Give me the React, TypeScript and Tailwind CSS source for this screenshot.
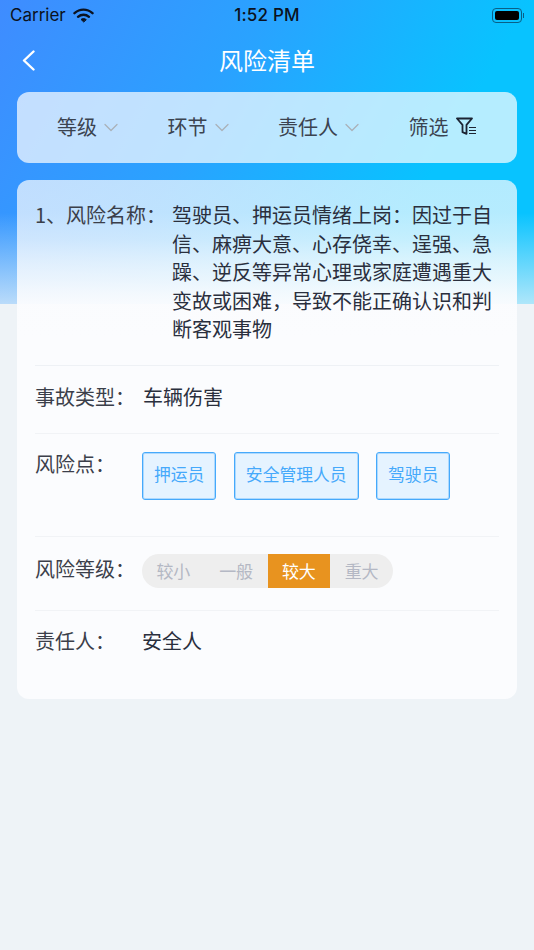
const font = { fontFamily: '"Noto Sans CJK SC", "Noto Sans", sans-serif' };

const filters = ['等级', '环节', '责任人'];
const points = ['押运员', '安全管理人员', '驾驶员'];
const levels = ['较小', '一般', '较大', '重大'];

function StatusBar() {
  return (
    <div className="flex h-[30px] items-center justify-between pl-[10px] pr-[10px] font-['Inter',sans-serif] text-[#0b1220]">
      <div className="flex w-[120px] items-center gap-[7px] text-[17px] leading-none">
        <span>Carrier</span>
        <svg width="21" height="15" viewBox="0 0 21 15" fill="none" stroke="#0b1220" strokeLinecap="round">
          <path d="M1.5 5.2C6.8 .4 14.2 .4 19.5 5.2" strokeWidth="2.4" />
          <path d="M5 8.8C8.2 6 12.8 6 16 8.8" strokeWidth="2.4" />
          <path d="M10.5 13.8 8 11.4c1.5-1.1 3.5-1.1 5 0z" fill="#0b1220" strokeWidth="1" />
        </svg>
      </div>
      <span className="text-[17px] font-medium leading-none tracking-[0.2px]">1:52 PM</span>
      <div className="flex w-[120px] items-center justify-end">
        <div className="flex h-[15px] w-[30px] items-center rounded-[4px] border border-[#0a5f86] p-[2px]">
          <div className="h-full w-full rounded-[2px] bg-black" />
        </div>
        <div className="ml-[1px] h-[5px] w-[1px] bg-[#0a5f86]" />
      </div>
    </div>
  );
}

function Caret() {
  return (
    <svg className="mt-[2px]" width="14" height="9" viewBox="0 0 14 9" fill="none" stroke="#aab1b8" strokeWidth="1.3" strokeLinecap="round" strokeLinejoin="round">
      <path d="M1 1.5 7 7.5l6-6" />
    </svg>
  );
}

function FilterIcon() {
  return (
    <svg width="21" height="19" viewBox="0 0 21 19" fill="none" stroke="#1c2433" strokeWidth="1.8">
      <path d="M1 1.5h15l-5.5 6.3v9l-4-1.6V7.8z" strokeLinejoin="round" />
      <path d="M13 10.5h7M13 13.5h7M13 16.5h7" strokeWidth="1.2" />
    </svg>
  );
}

function Row({
  label,
  children,
  className,
  labelClass = '',
}: {
  label: string;
  children: React.ReactNode;
  className: string;
  labelClass?: string;
}) {
  return (
    <div className={`flex border-b border-[#f1f3f6] ${className}`}>
      <div className={`w-[108px] shrink-0 text-[#3b3f4a] ${labelClass}`}>{label}</div>
      {children}
    </div>
  );
}

export default function App() {
  return (
    <div
      className="h-[950px] w-[534px] overflow-hidden bg-[#eef3f7] bg-[linear-gradient(180deg,rgba(239,244,248,0)_70%,rgba(239,244,248,0.72)_100%),linear-gradient(120deg,#3f8cff_0%,#2aa2ff_38%,#08c3ff_75%,#08c3ff_100%)] bg-[length:100%_304px] bg-no-repeat"
      style={font}
    >
      <StatusBar />

      <div className="relative flex h-[62px] items-center justify-center pb-[3px]">
        <svg className="absolute left-[22px] top-[20px]" width="13" height="21" viewBox="0 0 13 21" fill="none" stroke="#fff" strokeWidth="2.4" strokeLinecap="round" strokeLinejoin="round">
          <path d="M11.5 1.5 2 10.5l9.5 9" />
        </svg>
        <h1 className="text-[24px] leading-none text-white">风险清单</h1>
      </div>

      <div className="mx-[17px] flex h-[71px] items-center gap-[49.5px] rounded-[12px] bg-white/70 pb-[2px] pl-[40px] text-[20px] text-[#3b4350]">
        {filters.map((name) => (
          <div key={name} className="flex items-center gap-[7px]">
            <span>{name}</span>
            <Caret />
          </div>
        ))}
        <div className="flex items-center gap-[7px]">
          <span>筛选</span>
          <FilterIcon />
        </div>
      </div>

      <div className="mx-[17px] mt-[17px] h-[519px] rounded-[12px] bg-[linear-gradient(180deg,rgba(251,252,254,0.7)_0px,rgba(251,252,254,0.72)_60px,rgba(251,252,254,0.84)_100px,rgba(251,252,254,0.97)_128px,rgba(251,252,254,1)_160px)] px-[18px] text-[20px]">
        <div className="flex border-b border-[#eef1f5] pb-[21px] pt-[21px] leading-[28.5px]">
          <div className="w-[137px] shrink-0 text-[#3b3f4a]">{'1、风险名称\uFF1A'}</div>
          <div className="w-[320px] text-[#2a2f3d]">
            {'驾驶员、押运员情绪上岗\uFF1A因过于自信、麻痹大意、心存侥幸、逞强、急躁、逆反等异常心理或家庭遭遇重大变故或困难\uFF0C导致不能正确认识和判断客观事物'}
          </div>
        </div>

        <Row label={'事故类型\uFF1A'} className="h-[68px] items-center pb-[4px]">
          <span className="text-[#2a2f3d]">车辆伤害</span>
        </Row>

        <Row label={'风险点\uFF1A'} className="h-[103px] pt-[15px]">
          <div className="-ml-[1px] flex items-start gap-[17.5px] pt-[3px]">
            {points.map((p) => (
              <div
                key={p}
                className="flex h-[48px] items-center rounded-[3px] border border-[#45a9fb] bg-[#e5f3ff] px-[11px] pb-[2px] text-[16.8px] text-[#45a9fb] shadow-[inset_0_0_0_1px_rgba(69,169,251,0.35)]"
              >
                {p}
              </div>
            ))}
          </div>
        </Row>

        <Row label={'风险等级\uFF1A'} labelClass="pb-[5px]" className="h-[74px] items-center pb-[4px]">
          <div className="-ml-[1px] flex h-[34px] w-[251px] overflow-hidden rounded-full bg-[#eeeeee] text-[17px] text-[#b4b8c4]">
            {levels.map((l) => (
              <div
                key={l}
                className={`flex w-[63px] items-center justify-center ${l === '较大' ? 'bg-[#e8931f] text-white' : ''}`}
              >
                {l}
              </div>
            ))}
          </div>
        </Row>

        <div className="flex h-[64px] items-center pb-[4px]">
          <div className="w-[108px] shrink-0 text-[#3b3f4a]">{'责任人\uFF1A'}</div>
          <span className="-ml-[1px] text-[#2a2f3d]">安全人</span>
        </div>
      </div>
    </div>
  );
}
